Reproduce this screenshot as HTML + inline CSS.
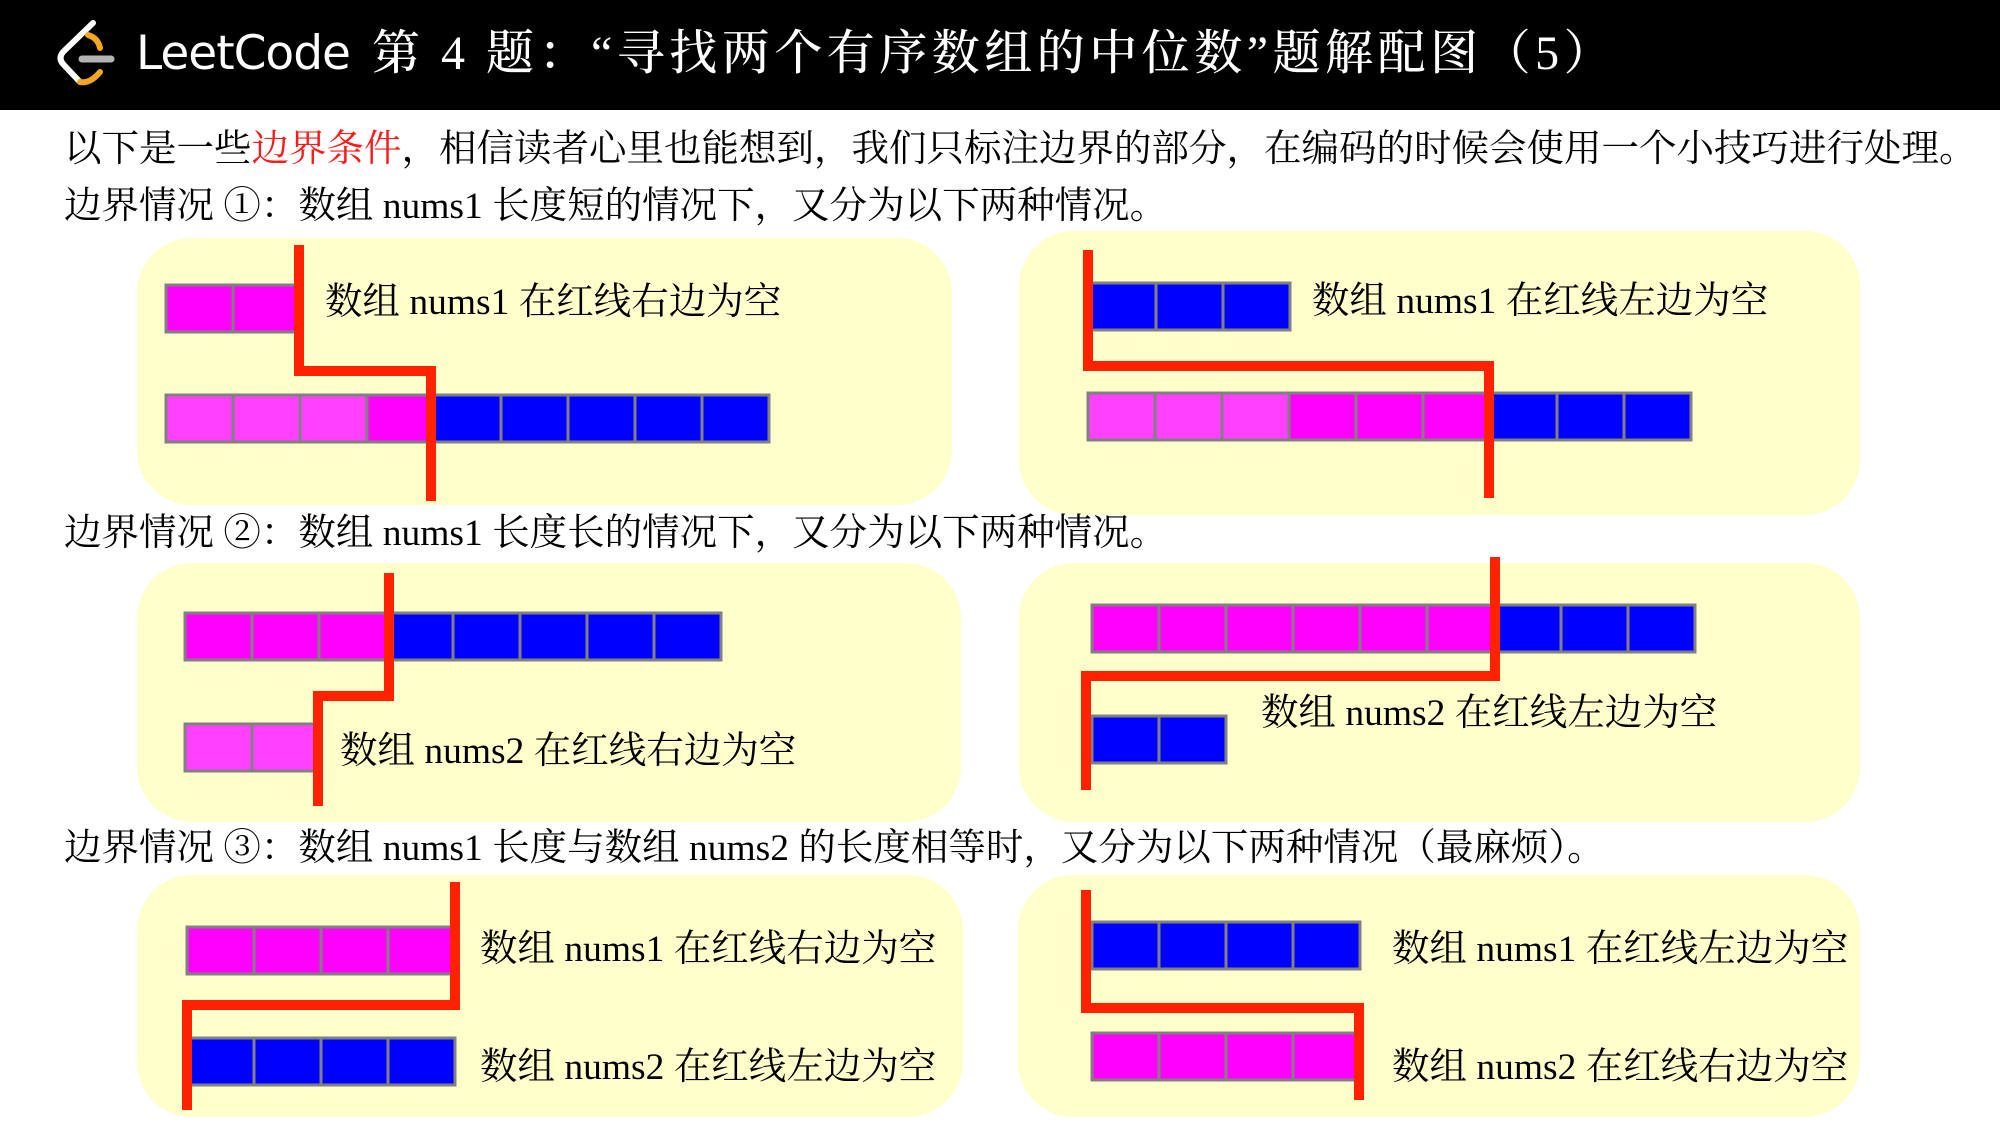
<!DOCTYPE html>
<html><head><meta charset="utf-8">
<style>
*{margin:0;padding:0;box-sizing:border-box}
html,body{width:2000px;height:1125px;background:#fff;overflow:hidden;position:relative}
.hdr{position:absolute;left:0;top:0;width:2000px;height:110px;background:#000}
.t{position:absolute;white-space:nowrap;font-family:"Liberation Serif","Noto Serif CJK SC",serif;color:#000;font-size:37.5px;line-height:40px}
.title{position:absolute;left:372px;top:26px;color:#fff;font-family:"Liberation Serif","Noto Serif CJK SC",serif;font-size:48px;letter-spacing:4.5px;line-height:56px;white-space:nowrap;font-weight:500}
.lc{position:absolute;left:136px;top:26px;color:#fff;font-family:"DejaVu Sans","Liberation Sans",sans-serif;font-size:47px;line-height:56px;letter-spacing:-1px}
svg{position:absolute;left:0;top:0}
</style></head><body>
<div class="hdr"></div>
<svg width="2000" height="1125" viewBox="0 0 2000 1125">
<g fill="none" stroke-linecap="round" stroke-linejoin="round">
<path d="M93 23 L63 52 Q58 58 63 64 L80 82" stroke="#fff" stroke-width="6"/>
<path d="M88 35 Q98 38 100 48" stroke="#f5a623" stroke-width="6"/>
<path d="M80 82 Q90 84 100 72" stroke="#f5a623" stroke-width="6"/>
<path d="M82 59 L111 59" stroke="#b3b3b3" stroke-width="7"/>
</g>
<g fill="#ffffcc">
<rect x="137" y="238" width="815" height="267" rx="55"/>
<rect x="1019" y="231" width="841" height="284" rx="55"/>
<rect x="137" y="563" width="824" height="259" rx="55"/>
<rect x="1019" y="563" width="841" height="259" rx="55"/>
<rect x="137" y="875" width="826" height="242" rx="55"/>
<rect x="1018" y="875" width="842" height="242" rx="55"/>
</g>
<g stroke="#808080" stroke-width="3">
<rect x="166" y="285" width="67" height="47" fill="#ff00ff"/>
<rect x="233" y="285" width="67" height="47" fill="#ff00ff"/>
<rect x="166" y="395" width="67" height="47" fill="#ff40ff"/>
<rect x="233" y="395" width="67" height="47" fill="#ff40ff"/>
<rect x="300" y="395" width="67" height="47" fill="#ff40ff"/>
<rect x="367" y="395" width="67" height="47" fill="#ff00ff"/>
<rect x="434" y="395" width="67" height="47" fill="#0000ff"/>
<rect x="501" y="395" width="67" height="47" fill="#0000ff"/>
<rect x="568" y="395" width="67" height="47" fill="#0000ff"/>
<rect x="635" y="395" width="67" height="47" fill="#0000ff"/>
<rect x="702" y="395" width="67" height="47" fill="#0000ff"/>
<rect x="1089" y="283" width="67" height="47" fill="#0000ff"/>
<rect x="1156" y="283" width="67" height="47" fill="#0000ff"/>
<rect x="1223" y="283" width="67" height="47" fill="#0000ff"/>
<rect x="1088" y="393" width="67" height="47" fill="#ff40ff"/>
<rect x="1155" y="393" width="67" height="47" fill="#ff40ff"/>
<rect x="1222" y="393" width="67" height="47" fill="#ff40ff"/>
<rect x="1289" y="393" width="67" height="47" fill="#ff00ff"/>
<rect x="1356" y="393" width="67" height="47" fill="#ff00ff"/>
<rect x="1423" y="393" width="67" height="47" fill="#ff00ff"/>
<rect x="1490" y="393" width="67" height="47" fill="#0000ff"/>
<rect x="1557" y="393" width="67" height="47" fill="#0000ff"/>
<rect x="1624" y="393" width="67" height="47" fill="#0000ff"/>
<rect x="185" y="613" width="67" height="47" fill="#ff00ff"/>
<rect x="252" y="613" width="67" height="47" fill="#ff00ff"/>
<rect x="319" y="613" width="67" height="47" fill="#ff00ff"/>
<rect x="386" y="613" width="67" height="47" fill="#0000ff"/>
<rect x="453" y="613" width="67" height="47" fill="#0000ff"/>
<rect x="520" y="613" width="67" height="47" fill="#0000ff"/>
<rect x="587" y="613" width="67" height="47" fill="#0000ff"/>
<rect x="654" y="613" width="67" height="47" fill="#0000ff"/>
<rect x="185" y="724" width="67" height="47" fill="#ff40ff"/>
<rect x="252" y="724" width="67" height="47" fill="#ff40ff"/>
<rect x="1092" y="605" width="67" height="47" fill="#ff00ff"/>
<rect x="1159" y="605" width="67" height="47" fill="#ff00ff"/>
<rect x="1226" y="605" width="67" height="47" fill="#ff00ff"/>
<rect x="1293" y="605" width="67" height="47" fill="#ff00ff"/>
<rect x="1360" y="605" width="67" height="47" fill="#ff00ff"/>
<rect x="1427" y="605" width="67" height="47" fill="#ff00ff"/>
<rect x="1494" y="605" width="67" height="47" fill="#0000ff"/>
<rect x="1561" y="605" width="67" height="47" fill="#0000ff"/>
<rect x="1628" y="605" width="67" height="47" fill="#0000ff"/>
<rect x="1092" y="716" width="67" height="47" fill="#0000ff"/>
<rect x="1159" y="716" width="67" height="47" fill="#0000ff"/>
<rect x="187" y="927" width="67" height="47" fill="#ff00ff"/>
<rect x="254" y="927" width="67" height="47" fill="#ff00ff"/>
<rect x="321" y="927" width="67" height="47" fill="#ff00ff"/>
<rect x="388" y="927" width="67" height="47" fill="#ff00ff"/>
<rect x="187" y="1038" width="67" height="47" fill="#0000ff"/>
<rect x="254" y="1038" width="67" height="47" fill="#0000ff"/>
<rect x="321" y="1038" width="67" height="47" fill="#0000ff"/>
<rect x="388" y="1038" width="67" height="47" fill="#0000ff"/>
<rect x="1092" y="922" width="67" height="47" fill="#0000ff"/>
<rect x="1159" y="922" width="67" height="47" fill="#0000ff"/>
<rect x="1226" y="922" width="67" height="47" fill="#0000ff"/>
<rect x="1293" y="922" width="67" height="47" fill="#0000ff"/>
<rect x="1092" y="1033" width="67" height="47" fill="#ff00ff"/>
<rect x="1159" y="1033" width="67" height="47" fill="#ff00ff"/>
<rect x="1226" y="1033" width="67" height="47" fill="#ff00ff"/>
<rect x="1293" y="1033" width="67" height="47" fill="#ff00ff"/>
</g>
<g fill="none" stroke="#ff2200" stroke-width="10" stroke-linejoin="miter">
<path d="M299 245 V371 H431 V501"/>
<path d="M1088 250 V366 H1489 V498"/>
<path d="M389 573 V696 H318 V806"/>
<path d="M1495 557 V676 H1086 V790"/>
<path d="M455 882 V1005 H187 V1110"/>
<path d="M1086 890 V1008 H1359 V1100"/>
</g>
</svg>
<div class="lc">LeetCode</div>
<div class="title">第 4 题：“寻找两个有序数组的中位数”题解配图（5）</div>
<div class="t" style="left:64px;top:130px">以下是一些<span style="color:#ff1a1a">边界条件</span>，相信读者心里也能想到，我们只标注边界的部分，在编码的时候会使用一个小技巧进行处理。</div>
<div class="t" style="left:64px;top:187px">边界情况 ①：数组 nums1 长度短的情况下，又分为以下两种情况。</div>
<div class="t" style="left:64px;top:514px">边界情况 ②：数组 nums1 长度长的情况下，又分为以下两种情况。</div>
<div class="t" style="left:64px;top:829px">边界情况 ③：数组 nums1 长度与数组 nums2 的长度相等时，又分为以下两种情况（最麻烦）。</div>
<div class="t" style="left:325px;top:283px">数组 nums1 在红线右边为空</div>
<div class="t" style="left:1312px;top:282px">数组 nums1 在红线左边为空</div>
<div class="t" style="left:340px;top:732px">数组 nums2 在红线右边为空</div>
<div class="t" style="left:1261px;top:694px">数组 nums2 在红线左边为空</div>
<div class="t" style="left:480px;top:930px">数组 nums1 在红线右边为空</div>
<div class="t" style="left:480px;top:1048px">数组 nums2 在红线左边为空</div>
<div class="t" style="left:1392px;top:930px">数组 nums1 在红线左边为空</div>
<div class="t" style="left:1392px;top:1048px">数组 nums2 在红线右边为空</div>
</body></html>
